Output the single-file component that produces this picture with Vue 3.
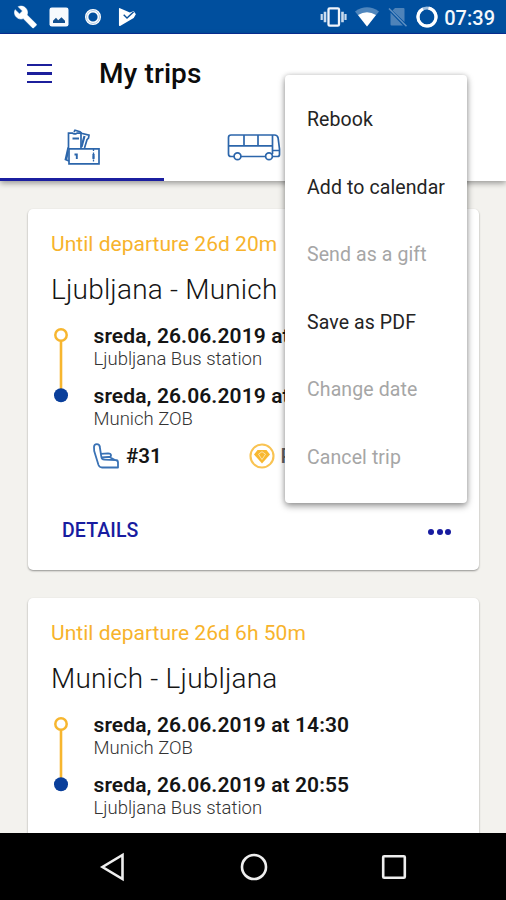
<template>
  <div class="screen">

    <!-- STATUS BAR -->
    <div class="status-bar">
      <div class="status-left">
        <svg class="ic-wrench" viewBox="0 0 24 24">
          <path d="M22.7 19l-9.1-9.1c.9-2.3.4-5-1.5-6.9-2-2-5-2.4-7.4-1.3L9 6 6 9 1.6 4.7C.4 7.1.9 10.1 2.9 12.1c1.9 1.9 4.6 2.4 6.9 1.5l9.1 9.1c.4.4 1 .4 1.4 0l2.3-2.3c.5-.4.5-1.1.1-1.4z" fill="#fff" stroke="#fff" stroke-width="0.6" />
        </svg>
        <svg class="ic-photo" viewBox="0 0 20 20">
          <rect x="0.5" y="0.5" width="19" height="19" rx="2.3" fill="#f6fafd" />
          <path d="M4 16v-2.2l3-3 2.2 2.4 3.3-3 3.5 3.6v2.2z" fill="#12508f" />
        </svg>
        <svg class="ic-target" viewBox="0 0 18 18">
          <circle cx="9" cy="9" r="6.3" fill="none" stroke="#fff" stroke-width="3.4" />
          <circle cx="9" cy="9" r="6.5" fill="none" stroke="#8fb4da" stroke-width="0.7" />
        </svg>
        <svg class="ic-play" viewBox="0 0 20 20">
          <path d="M1.5 0.5L12.5 5.2 16.5 3.7 18.8 7.2 16.5 11 2.2 19.4Q1 19.8 1 18.5V1Z" fill="#fff" />
          <path d="M6 7.6l3.5 3.4 7-6.5" fill="none" stroke="#0a519b" stroke-width="1.5" />
        </svg>
      </div>
      <div class="status-right">
        <svg class="ic-vibrate" viewBox="0 0 27 20">
          <rect x="8.5" y="1.3" width="10.5" height="17.4" rx="1.2" fill="none" stroke="#f1f5fb" stroke-width="2.3" />
          <path d="M5 4.8v10.4M22.5 4.8v10.4" stroke="#c9dbee" stroke-width="2.6" />
          <path d="M1.7 7v6M25.5 7v6" stroke="#c9dbee" stroke-width="2.2" />
        </svg>
        <svg class="ic-wifi" viewBox="0 0 24 20">
          <path d="M0 4.5Q12-3.8 24 4.5L12 19.5Z" fill="#4f86bd" />
          <path d="M3 8Q12 2.5 21 8L12 19.5Z" fill="#fff" />
        </svg>
        <svg class="ic-sim" viewBox="0 0 20 20">
          <path d="M7 1h8.500q1 0 1 1v13L4.500 3.500zM2.500 5.500L15 18.500H3.500q-1 0-1-1z" fill="#4e83b9" />
          <path d="M1 1.5L18.5 19.3" stroke="#5f90c2" stroke-width="1.5" />
        </svg>
        <svg class="ic-ring" viewBox="0 0 22 22">
          <circle cx="11" cy="11" r="9" fill="none" stroke="#9fbfdf" stroke-width="3" />
          <path d="M12.5 2.1a9 9 0 1 1-5.5.8" fill="none" stroke="#fff" stroke-width="3.2" />
        </svg>
        <span class="clock">07:39</span>
      </div>
    </div>

    <!-- HEADER -->
    <div class="header">
      <div class="toolbar">
        <button class="hamburger" @click="menuOpen = false">
          <span></span><span></span><span></span>
        </button>
        <h1>My trips</h1>
      </div>
      <div class="tabs">
        <div class="tab" :class="{ active: tab === 0 }" @click="tab = 0">
          <svg class="ic-tickets" viewBox="0 0 36 36" fill="none" stroke="#2c66ab" stroke-width="1.7">
            <path d="M4.5 19V4.2h4q1.5 1.5 4.5 0h4V19" />
            <path d="M10 3l1-1.8 5 1.6 1.5 1.4 7.5 2-.5 3-1.5 1.5-2.5 8.3" />
            <path d="M20.5 7l-3 11" stroke-width="2.2" />
            <path d="M8.5 9.5h6.500" stroke-width="2" />
            <path d="M4.2 18.5L1.5 30.5l3.5 1.5M4 22L2.5 30" stroke-width="1.8" />
            <path d="M5 19.8h30v15H5z" />
            <path d="M10.5 25.5h2.3v4.5" stroke-width="1.9" />
            <path d="M29.5 20v15" stroke-dasharray="2 1.5" stroke-width="1.3" />
            <path d="M29.5 25v5" stroke-width="2.2" />
          </svg>
        </div>
        <div class="tab" :class="{ active: tab === 1 }" @click="tab = 1">
          <svg class="ic-bus" viewBox="0 0 54 28" fill="none" stroke="#2c66ab" stroke-width="1.7">
            <path d="M7 23.5H4q-2.5 0-2.5-2.5V4.5Q1.5 2 4 2h43.5q3 0 3.6 3L52.5 16v5.5q0 2-2 2H46M14 23.5h24" />
            <path d="M1.5 12.8H45M17 2v10.5M31 2v10.5M45.5 2v19M45.5 17.5h7" />
            <circle cx="10.5" cy="23.3" r="3.4" />
            <circle cx="42" cy="23.3" r="3.4" />
          </svg>
        </div>
        <div class="tab"></div>
      </div>
    </div>

    <!-- TRIPS -->
    <div class="trips">
      <div v-for="t in trips" :key="t.id" class="card">
        <div class="countdown">{{ t.countdown }}</div>
        <h2>{{ t.route }}</h2>

        <div class="stops">
          <svg class="track" viewBox="0 0 16 78">
            <path d="M8 13v54" stroke="#f7b62f" stroke-width="2.6" />
            <circle cx="8" cy="8" r="5.7" fill="#fff" stroke="#f7b62f" stroke-width="2.5" />
            <circle cx="8" cy="68.3" r="7" fill="#0a3f9b" />
          </svg>
          <div class="stop-list">
            <div v-for="s in t.stops" :key="s.place" class="stop">
              <div class="time">{{ s.time }}</div>
              <div class="place">{{ s.place }}</div>
            </div>
          </div>
        </div>

        <template v-if="t.seat">
          <div class="extras">
            <svg class="ic-seat" viewBox="0 0 26 26" fill="none" stroke="#3a72b5" stroke-width="1.8" stroke-linejoin="round">
              <path d="M1 4Q1 1.2 3.8 1.2T6.8 4L8.3 13.5Q8.5 16.5 11.5 16.7L22.5 17Q25 17 25 19.5V24.5H9Q6.5 24.5 5.5 22L1.2 8Z" />
              <path d="M8 10.8L15 10.3Q18 10.5 18 12.2T15.5 14L8.5 14.5M16 13.8l5.5 3" />
            </svg>
            <span class="seat">{{ t.seat }}</span>
            <svg class="ic-gem" viewBox="0 0 26 26">
              <circle cx="13" cy="13" r="11.5" fill="none" stroke="#f9c352" stroke-width="2.1" />
              <path d="M8.5 7h9l3.5 4.5L13 20.5 5 11.5z" fill="#f8b830" />
              <path d="M9.5 11.2L13 8.7l3.5 2.5L13 16.5z" fill="none" stroke="#fde5b4" stroke-width="0.9" />
            </svg>
            <span class="fare">{{ t.fare }}</span>
          </div>

          <div class="actions">
            <button class="details">DETAILS</button>
            <button class="more" @click="menuOpen = !menuOpen">
              <i></i><i></i><i></i>
            </button>
          </div>
        </template>
      </div>
    </div>

    <!-- ANDROID NAV -->
    <div class="nav-bar">
      <svg viewBox="0 0 30 30"><path d="M24.5 3v24L4.5 15z" /></svg>
      <svg viewBox="0 0 30 30"><circle cx="15" cy="15" r="12" /></svg>
      <svg viewBox="0 0 30 30"><rect x="4.2" y="4.2" width="21.6" height="21.6" rx="1" /></svg>
    </div>

    <!-- POPUP MENU -->
    <div v-if="menuOpen" class="popup">
      <div v-for="o in options" :key="o.label" class="option" :class="{ disabled: o.disabled }">
        {{ o.label }}
      </div>
    </div>

  </div>
</template>

<script setup>
import { ref } from "vue"

const tab = ref(0)
const menuOpen = ref(true)

const options = [
  { label: "Rebook" },
  { label: "Add to calendar" },
  { label: "Send as a gift", disabled: true },
  { label: "Save as PDF" },
  { label: "Change date", disabled: true },
  { label: "Cancel trip", disabled: true }
]

const trips = ref([
  {
    id: 1,
    countdown: "Until departure 26d 20m",
    route: "Ljubljana - Munich",
    stops: [
      { time: "sreda, 26.06.2019 at", place: "Ljubljana Bus station" },
      { time: "sreda, 26.06.2019 at", place: "Munich ZOB" }
    ],
    seat: "#31",
    fare: "P"
  },
  {
    id: 2,
    countdown: "Until departure 26d 6h 50m",
    route: "Munich - Ljubljana",
    stops: [
      { time: "sreda, 26.06.2019 at 14:30", place: "Munich ZOB" },
      { time: "sreda, 26.06.2019 at 20:55", place: "Ljubljana Bus station" }
    ]
  }
])
</script>

<style>
body {
  margin: 0;
  background: #000;
}
</style>

<style scoped>
.screen {
  position: relative;
  display: flex;
  flex-direction: column;
  width: 506px;
  height: 900px;
  overflow: hidden;
  background: #f3f2ee;
  font-family: Roboto, "Liberation Sans", sans-serif;
  color: #151515;
}

svg {
  display: block;
  flex: none;
}

button {
  border: 0;
  padding: 0;
  background: none;
  font-family: inherit;
}

.status-bar {
  display: flex;
  justify-content: space-between;
  flex: none;
  box-sizing: border-box;
  height: 34px;
  padding: 0 11px 0 13px;
  background: #004f9e;
  border-bottom: 1px solid #08309a;
}

.status-left,
.status-right {
  display: flex;
  align-items: center;
}

.ic-wrench { width: 25px; height: 24px; margin-top: 1px; }
.ic-photo { width: 20px; height: 20px; margin-left: 11px; margin-top: 1px; }
.ic-target { width: 18px; height: 18px; margin-left: 15px; margin-top: 1px; }
.ic-play { width: 19px; height: 20px; margin-left: 16px; margin-top: 1px; }
.ic-vibrate { width: 27px; height: 20px; margin-top: 1px; }
.ic-wifi { width: 24px; height: 20px; margin-left: 8px; margin-top: 1px; }
.ic-sim { width: 20px; height: 20px; margin-left: 9px; margin-top: 1px; }
.ic-ring { width: 22px; height: 22px; margin-left: 8px; margin-top: 1px; }

.clock {
  margin-left: 6px;
  margin-top: 2px;
  color: #f4f8fc;
  font-size: 20px;
  font-weight: 500;
  line-height: 24px;
}

.header {
  flex: none;
  position: relative;
  height: 147px;
  background: #fff;
  box-shadow: 0 2px 6px rgba(0, 0, 0, 0.4);
}

.toolbar {
  display: flex;
  align-items: center;
  height: 79px;
  padding-left: 27px;
}

.hamburger {
  display: flex;
  flex-direction: column;
  gap: 6px;
  width: 25px;
}

.hamburger span {
  height: 2.3px;
  background: #1c1f9c;
}

h1 {
  margin: 0 0 0 47px;
  color: #0c0c0c;
  font-size: 28px;
  font-weight: 500;
  line-height: 32px;
  letter-spacing: 0.1px;
}

.tabs {
  display: flex;
  height: 68px;
}

.tab {
  display: flex;
  justify-content: center;
  box-sizing: border-box;
  width: 163.5px;
  padding-top: 16px;
}

.tab.active {
  border-bottom: 3px solid #1b1fa0;
}

.ic-tickets { width: 36px; height: 36px; margin-left: 1px; }
.ic-bus { width: 54px; height: 28px; margin: 4px 0 0 18px; }

.trips {
  flex: 1;
  min-height: 0;
  overflow: hidden;
  padding: 28px 27px 0 28px;
}

.card {
  box-sizing: border-box;
  height: 361px;
  margin-bottom: 28px;
  padding: 22px 24px 0 23px;
  border-radius: 5px;
  background: #fff;
  box-shadow: 0 1px 2px rgba(0, 0, 0, 0.4);
}

.countdown {
  height: 26px;
  color: #f7b32c;
  font-size: 21px;
  line-height: 26px;
  letter-spacing: 0.02px;
  white-space: nowrap;
}

h2 {
  margin: 15px 0 0;
  height: 36px;
  font-size: 28px;
  font-weight: 300;
  line-height: 36px;
  letter-spacing: 0.2px;
  white-space: nowrap;
}

.stops {
  display: flex;
  margin-top: 15px;
  height: 121px;
}

.track {
  width: 16px;
  height: 78px;
  margin: 3.5px 0 0 2px;
}

.stop-list {
  margin-left: 24.5px;
  padding-top: 1.5px;
}

.stop {
  height: 60.5px;
  white-space: nowrap;
}

.time {
  font-size: 21px;
  font-weight: 600;
  line-height: 23px;
  letter-spacing: 0.1px;
}

.place {
  color: #333;
  font-size: 18.5px;
  font-weight: 300;
  line-height: 23px;
}

.extras {
  display: flex;
  align-items: center;
  height: 26px;
  margin-top: -1px;
  padding-left: 42px;
  font-size: 20.5px;
  font-weight: 600;
}

.ic-seat { width: 26px; height: 26px; }

.seat {
  width: 89px;
  margin-left: 7px;
}

.ic-gem {
  width: 26px;
  height: 26px;
  margin-left: 34px;
}

.fare {
  margin-left: 5.5px;
  color: #666;
  font-weight: 500;
}

.actions {
  display: flex;
  justify-content: space-between;
  align-items: center;
  height: 40px;
  margin-top: 41px;
  padding: 0 4px 0 11px;
}

.details {
  color: #181ca0;
  font-size: 19.5px;
  font-weight: 500;
  letter-spacing: 0.1px;
}

.more {
  display: flex;
  gap: 2.5px;
  margin-top: 3px;
}

.more i {
  width: 6px;
  height: 6px;
  border-radius: 50%;
  background: #181ca0;
}

.nav-bar {
  flex: none;
  display: flex;
  justify-content: space-between;
  box-sizing: border-box;
  height: 67px;
  padding: 19px 97px 0 98px;
  background: #000;
}

.nav-bar svg {
  width: 30px;
  height: 30px;
  fill: none;
  stroke: #eee;
  stroke-width: 2.6;
}

.popup {
  position: absolute;
  top: 75px;
  left: 285px;
  box-sizing: border-box;
  width: 182px;
  height: 428px;
  padding-top: 11px;
  border-radius: 4px;
  background: #fff;
  box-shadow: 0 3px 7px rgba(0, 0, 0, 0.4), 0 0 5px rgba(0, 0, 0, 0.14);
}

.option {
  height: 67.5px;
  padding-left: 22px;
  color: #242424;
  font-size: 19.5px;
  line-height: 67.5px;
  letter-spacing: 0.1px;
  white-space: nowrap;
}

.option.disabled {
  color: #a6a6a6;
}
</style>
